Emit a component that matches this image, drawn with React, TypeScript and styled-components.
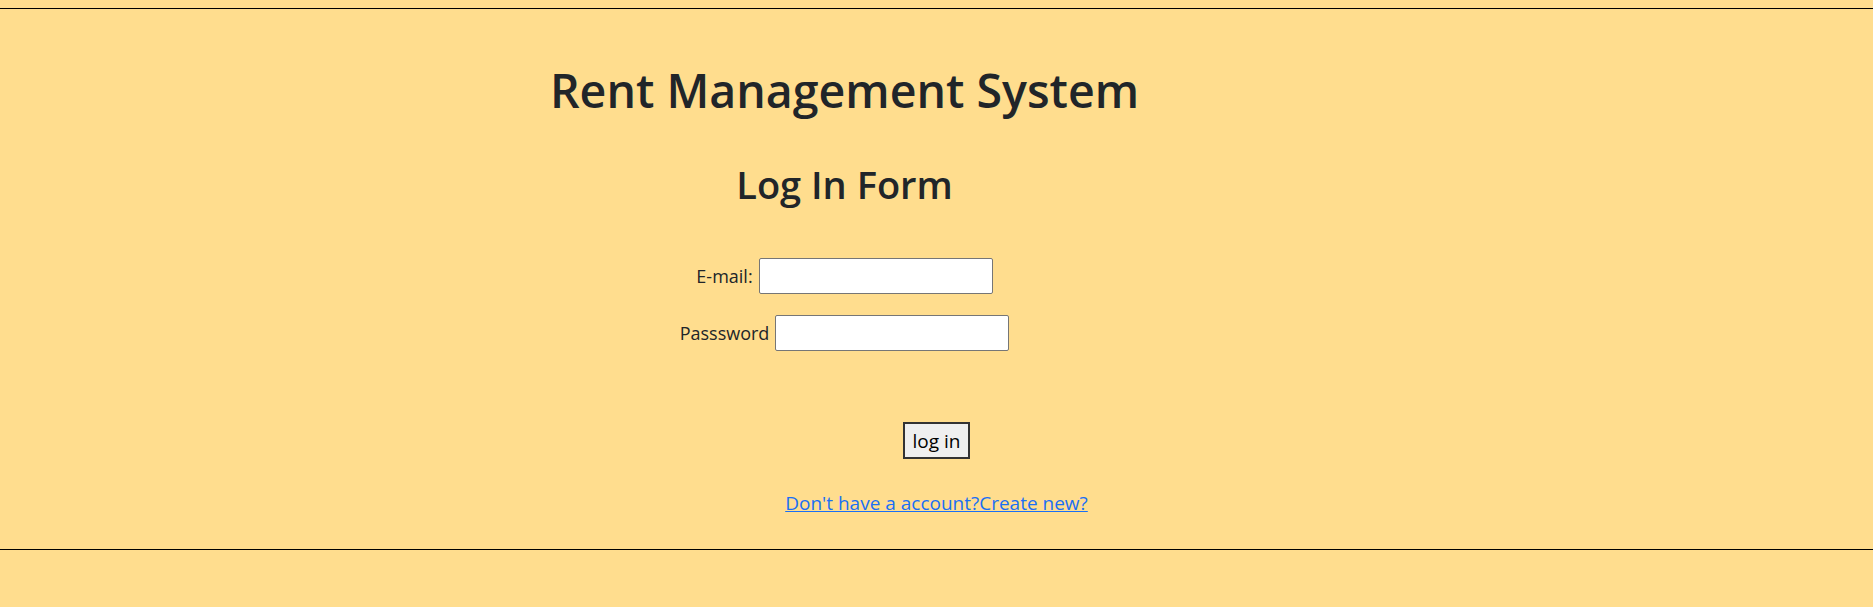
import React from "react";
import styled, { createGlobalStyle } from "styled-components";

const Global = createGlobalStyle`
  html, body {
    margin: 0;
    padding: 0;
    background: #ffdd8e;
  }
  body {
    padding: 8px 8px 0 8px;
    font-family: "Open Sans", "Noto Sans", sans-serif;
    color: #212529;
  }
`;

const Page = styled.div`
  border-top: 1px solid #000;
  border-bottom: 1px solid #000;
  height: 540px;
  margin: 0 -8px;
  padding: 0 8px;
  display: flex;
  flex-direction: column;
  align-items: flex-start;
`;

const Header = styled.header`
  width: 1673px;
  text-align: center;
`;

const Title = styled.h1`
  margin: 54px 0 0 0;
  font-size: 46.5px;
  font-weight: 600;
  line-height: 1.2;
`;

const Subtitle = styled.h2`
  margin: 43px 0 0 0;
  font-size: 38px;
  font-weight: 600;
  line-height: 1.2;
`;

const Form = styled.form`
  width: 1673px;
  margin-top: 51px;
  display: flex;
  flex-direction: column;
  align-items: center;
  gap: 21px;
`;

const Row = styled.div`
  display: flex;
  align-items: center;
  gap: 6px;
`;

const Label = styled.label`
  font-size: 18px;
`;

const Input = styled.input`
  box-sizing: border-box;
  width: 234px;
  height: 36px;
  border: 1px solid #767676;
  border-radius: 2px;
  background: #fff;
  padding: 2px 4px;
  font-size: 16px;
`;

const Actions = styled.div`
  width: 100%;
  display: flex;
  flex-direction: column;
  align-items: center;
`;

const Button = styled.button`
  margin-top: 71px;
  box-sizing: border-box;
  height: 37px;
  padding: 0 8px;
  background: #efefef;
  border: 2px solid #333;
  border-radius: 0;
  color: #000;
  font-family: "Open Sans", "Noto Sans", sans-serif;
  font-size: 19px;
`;

const Link = styled.a`
  margin-top: 31px;
  color: #1a6ff5;
  text-decoration: underline;
  font-size: 19px;
`;

export default function App() {
  return (
    <>
      <Global />
      <Page>
        <Header>
          <Title>Rent Management System</Title>
          <Subtitle>Log In Form</Subtitle>
        </Header>
        <Form onSubmit={(e) => e.preventDefault()}>
          <Row>
            <Label htmlFor="email">E-mail:</Label>
            <Input id="email" type="email" />
          </Row>
          <Row>
            <Label htmlFor="password">Passsword</Label>
            <Input id="password" type="password" />
          </Row>
        </Form>
        <Actions>
          <Button type="button">log in</Button>
          <Link href="#">Don't have a account?Create new?</Link>
        </Actions>
      </Page>
    </>
  );
}
